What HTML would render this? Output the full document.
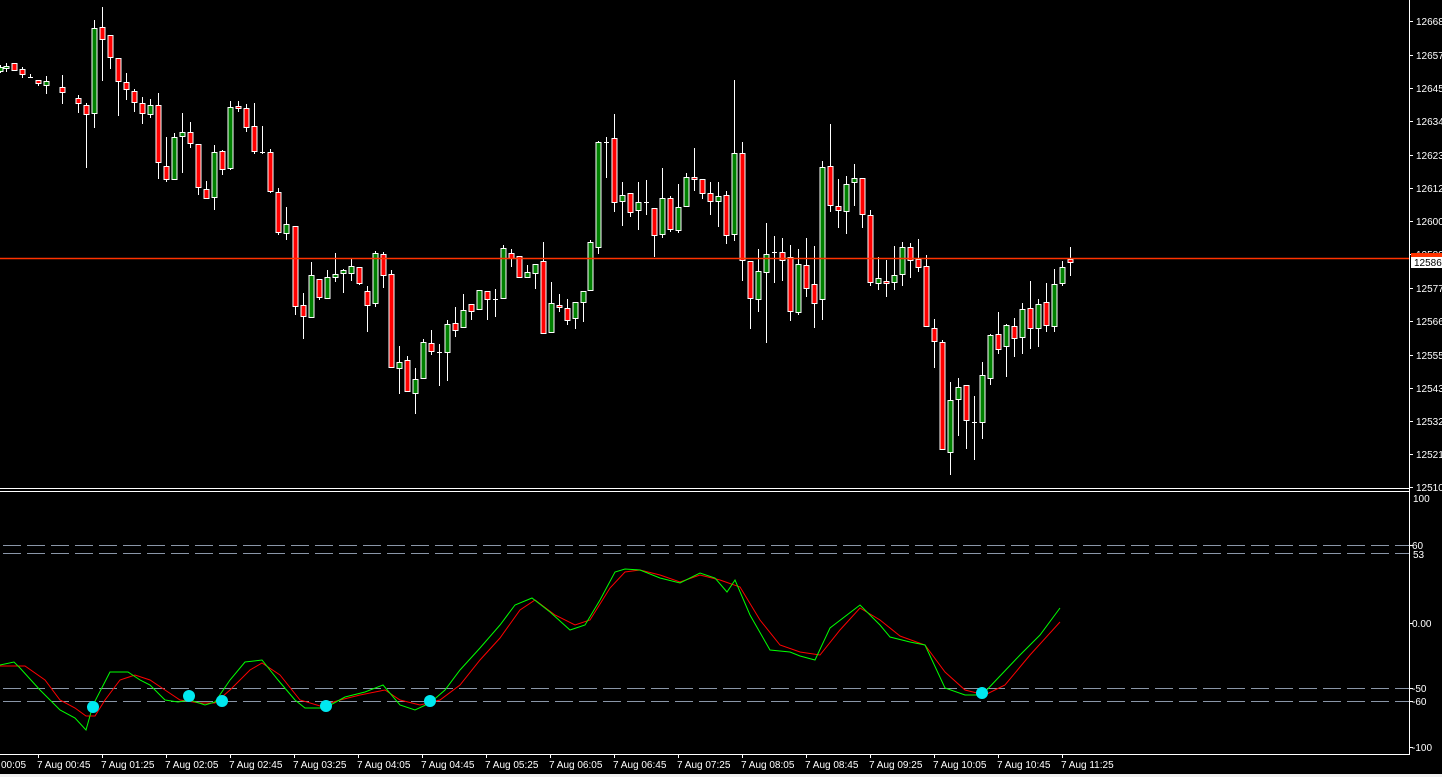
<!DOCTYPE html>
<html><head><meta charset="utf-8"><style>
html,body{margin:0;padding:0;background:#000;width:1442px;height:777px;overflow:hidden}
svg{display:block}
text{font-family:"Liberation Sans",sans-serif;font-size:10px;fill:#fff}
</style></head><body>
<svg id="s" width="1442" height="777" xmlns="http://www.w3.org/2000/svg">
<rect width="1442" height="777" fill="#000"/>
<rect y="774" width="1442" height="3" fill="#f0f0f0"/>
<g id="c"></g>
<line x1="0" y1="258.5" x2="1410" y2="258.5" stroke="#ff3300" stroke-width="1.5"/>
<line x1="0" y1="488.5" x2="1410" y2="488.5" stroke="#fff"/>
<line x1="0" y1="491.5" x2="1410" y2="491.5" stroke="#fff"/>
<line x1="0" y1="754.5" x2="1410" y2="754.5" stroke="#fff"/>
<line x1="1409.5" y1="0" x2="1409.5" y2="755" stroke="#fff"/>
<g stroke="#8a96a8" stroke-dasharray="18,6">
<line x1="3" y1="545.5" x2="1409" y2="545.5"/>
<line x1="3" y1="553.5" x2="1409" y2="553.5"/>
<line x1="3" y1="688.5" x2="1409" y2="688.5"/>
<line x1="3" y1="701.5" x2="1409" y2="701.5"/>
</g>
<g id="ind"></g>
<g id="ax"></g>
<rect x="1411" y="253" width="31" height="4" fill="#ff3300"/>
<rect x="1411" y="257" width="31" height="11" fill="#fff"/>
<text x="1414" y="266" style="fill:#000">12586.</text>
</svg>
<script>
var NS="http://www.w3.org/2000/svg";
function el(p,t,a,txt){var e=document.createElementNS(NS,t);for(var k in a)e.setAttribute(k,a[k]);if(txt)e.textContent=txt;p.appendChild(e);return e;}
// x, bodyTop, bodyBot, high, low, color
var d=[
[0,67,71,65,73,'g'],[6,66,68,63,72,'g'],[14,63,70,63,70,'r'],[22,69,74,67,78,'r'],[30,77,77,74,78,'d'],[38,80,83,80,86,'r'],[46,81,85,76,94,'g'],
[62,87,92,75,104,'r'],[78,98,103,95,113,'r'],[86,105,114,103,168,'r'],[94,28,113,20,128,'g'],[102,27,39,7,81,'r'],[110,35,57,35,69,'r'],
[118,58,81,58,116,'r'],[126,82,89,73,100,'r'],[134,91,102,89,112,'r'],[142,103,113,97,124,'r'],[150,105,114,99,118,'g'],[158,105,162,93,179,'r'],
[166,166,179,137,182,'r'],[174,137,179,133,180,'g'],[182,132,136,113,173,'g'],[190,132,143,122,148,'r'],[198,144,187,144,195,'r'],[206,189,198,181,199,'r'],
[214,152,197,145,210,'g'],[222,151,169,150,175,'r'],[230,107,168,101,170,'g'],[238,106,108,101,112,'r'],[246,108,127,104,132,'r'],[254,126,151,103,154,'r'],
[262,152,152,126,154,'d'],[270,152,191,149,193,'r'],[278,192,232,188,235,'r'],[286,224,233,207,240,'g'],[295,226,306,226,315,'r'],[303,305,316,293,339,'r'],
[311,275,317,262,318,'g'],[319,279,297,279,300,'r'],[327,277,298,270,299,'g'],[335,274,277,253,282,'g'],[343,270,273,269,293,'g'],[351,266,273,259,281,'g'],
[359,267,283,267,285,'r'],[367,291,305,286,332,'r'],[375,253,303,251,307,'g'],[383,254,275,252,288,'r'],[391,274,367,270,368,'r'],[399,362,368,346,394,'g'],
[407,360,391,356,391,'r'],[415,379,393,368,414,'g'],[423,342,378,339,379,'g'],[431,343,351,330,355,'r'],[439,352,352,344,386,'d'],[447,324,352,320,381,'g'],
[455,323,330,307,337,'r'],[463,310,327,294,328,'g'],[471,304,311,304,320,'r'],[479,290,309,290,310,'g'],[487,291,299,291,320,'r'],[495,299,299,289,317,'d'],
[503,248,298,245,299,'g'],[511,253,258,249,267,'r'],[519,256,277,256,278,'r'],[527,272,277,265,278,'g'],[535,264,273,264,289,'g'],[543,261,333,242,334,'r'],
[551,303,332,282,333,'g'],[559,305,306,294,312,'r'],[567,308,320,299,325,'r'],[575,302,318,302,329,'g'],[583,291,302,291,322,'g'],[590,242,290,240,291,'g'],
[598,142,247,141,254,'g'],[606,142,142,137,178,'d'],[614,138,202,114,212,'r'],[622,195,201,182,226,'g'],[630,193,212,193,217,'r'],[638,202,210,182,230,'g'],
[646,202,202,180,215,'d'],[654,208,235,208,257,'r'],[662,198,234,168,238,'g'],[670,198,229,196,232,'r'],[678,207,230,184,233,'g'],[686,177,206,173,207,'g'],
[694,177,178,148,191,'r'],[702,179,193,179,199,'r'],[710,193,201,182,215,'r'],[718,196,201,182,227,'g'],[726,195,235,191,244,'r'],[734,153,234,80,241,'g'],
[742,153,260,142,281,'r'],[750,261,298,261,329,'r'],[758,271,299,249,312,'g'],[766,254,272,223,343,'g'],[774,252,252,236,283,'d'],[782,252,260,238,281,'r'],
[790,257,311,245,321,'r'],[798,264,312,249,315,'g'],[806,265,288,238,297,'r'],[814,284,303,246,328,'r'],[822,167,299,161,320,'g'],[830,166,205,124,212,'r'],
[838,206,210,179,228,'r'],[846,184,211,176,234,'g'],[854,178,182,164,206,'g'],[862,178,214,178,228,'r'],[870,215,282,210,286,'r'],[878,278,283,257,290,'g'],
[886,281,283,260,297,'r'],[894,275,282,246,290,'g'],[902,247,274,242,286,'g'],[910,247,260,243,278,'r'],[918,259,267,239,272,'r'],[926,266,326,255,327,'r'],
[934,328,341,319,368,'r'],[942,342,449,340,450,'r'],[950,400,452,382,475,'g'],[958,387,399,378,436,'g'],[966,385,420,385,449,'r'],[974,422,422,396,460,'d'],
[982,375,422,362,439,'g'],[990,335,378,334,385,'g'],[998,334,349,312,354,'r'],[1006,325,346,324,377,'g'],[1014,326,338,318,357,'r'],[1022,309,337,303,354,'g'],
[1030,308,328,281,349,'r'],[1038,304,328,299,347,'g'],[1046,302,325,283,332,'r'],[1054,284,326,269,332,'g'],[1062,267,283,261,286,'g'],[1070,259,262,247,276,'r']
];
var c=document.getElementById('c');
d.forEach(function(a){
 var x=a[0];
 el(c,'line',{x1:x+0.5,y1:a[3],x2:x+0.5,y2:a[4],stroke:'#fff'});
 if(a[5]=='d'){el(c,'line',{x1:x-2,y1:a[1]+0.5,x2:x+3,y2:a[1]+0.5,stroke:'#fff'});}
 else{var h=Math.max(a[2]-a[1],2);el(c,'rect',{x:x-2,y:a[1]+0.5,width:5,height:h,fill:a[5]=='g'?'#008000':'#ff0000',stroke:'#fff'});}
});
var ind=document.getElementById('ind');
var g=[[0,665],[14,662],[20,668],[40,690],[60,710],[75,718],[86,730],[93,705],[110,672],[128,672],[140,680],[150,685],[165,700],[178,702],[190,700],[205,705],[215,702],[230,680],[245,662],[262,660],[278,680],[295,700],[305,708],[325,708],[345,697],[365,692],[383,685],[400,705],[415,710],[430,703],[445,690],[460,670],[480,648],[500,625],[515,605],[532,598],[550,612],[570,630],[585,625],[600,600],[615,572],[625,569],[640,570],[660,578],[680,583],[700,573],[715,578],[727,592],[735,580],[750,615],[770,650],[790,652],[800,656],[815,660],[830,628],[860,605],[880,625],[890,637],[910,642],[925,645],[945,688],[965,695],[982,695],[1000,676],[1020,655],[1040,635],[1060,608]];
var r=[[0,666],[25,666],[45,680],[60,700],[75,708],[86,716],[95,716],[105,700],[120,680],[135,675],[150,680],[165,690],[180,700],[200,703],[215,703],[230,690],[250,670],[262,663],[280,675],[300,700],[320,706],[340,700],[360,695],[385,690],[400,700],[420,705],[440,700],[460,685],[480,660],[500,638],[520,610],[535,600],[555,615],[575,625],[590,620],[610,588],[625,572],[640,570],[660,575],[680,582],[700,575],[720,580],[740,587],[760,620],[780,645],[800,652],[820,655],[840,630],[860,608],[880,620],[900,636],[925,645],[945,672],[965,690],[985,695],[1005,685],[1030,655],[1060,622]];
el(ind,'polyline',{points:r.join(' '),fill:'none',stroke:'#ff0000'});
el(ind,'polyline',{points:g.join(' '),fill:'none',stroke:'#00ff00'});
[[93,707],[189,696],[222,701],[326,706],[430,701],[982,693]].forEach(function(p){el(ind,'circle',{cx:p[0],cy:p[1],r:6,fill:'#00e8f0'});});
var ax=document.getElementById('ax');
var pl=[['12668.',21],['12657.',55],['12645.',88],['12634.',121],['12623.',155],['12612.',188],['12600.',221],['12589.',254],['12577.',288],['12566.',321],['12555.',355],['12543.',388],['12532.',421],['12521.',454],['12510.',487]];
pl.forEach(function(p){el(ax,'line',{x1:1410,y1:p[1]+0.5,x2:1413,y2:p[1]+0.5,stroke:'#fff'});el(ax,'text',{x:1416,y:p[1]+4},p[0]);});
[['100',498,0],['60',545,1],['53',554,0],['0.00',623,1],['-50',688,1],['-60',701,1],['-100',747,1]].forEach(function(p){if(p[2])el(ax,'line',{x1:1410,y1:p[1]+0.5,x2:1413,y2:p[1]+0.5,stroke:'#fff'});el(ax,'text',{x:p[0]=='53'||p[0]=='100'?1413:1412,y:p[1]+4},p[0]);});
el(ax,'text',{x:1,y:768},'00:05');
var ts=['00:45','01:25','02:05','02:45','03:25','04:05','04:45','05:25','06:05','06:45','07:25','08:05','08:45','09:25','10:05','10:45','11:25'];
ts.forEach(function(t,i){var x=38+64*i;el(ax,'line',{x1:x+0.5,y1:754,x2:x+0.5,y2:758,stroke:'#fff'});el(ax,'text',{x:x-1,y:768},'7 Aug '+t);});
</script>
</body></html>
